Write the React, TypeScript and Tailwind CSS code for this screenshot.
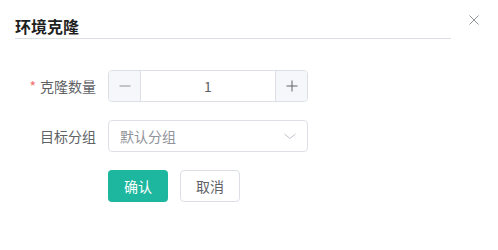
import React from 'react';

const font = { fontFamily: '"Noto Sans CJK SC", "Liberation Sans", sans-serif' };

export default function App() {
  return (
    <div className="w-[498px] h-[250px] bg-white relative text-[#606266]" style={font}>
      {/* Header */}
      <div className="pt-[15px] pl-[15px] pr-[47px]">
        <div className="h-[24px] border-b border-[#dcdfe6] text-[16px] leading-[22px] font-bold text-[#1f1f1f]">
          环境克隆
        </div>
      </div>
      <button className="absolute top-[15px] right-[19px] w-[10px] h-[10px] text-[#909399]">
        <svg viewBox="0 0 10 10" width="10" height="10" fill="none" stroke="currentColor" strokeWidth="1">
          <path d="M0.5 0.5 L9.5 9.5 M9.5 0.5 L0.5 9.5" />
        </svg>
      </button>

      {/* Form */}
      <div className="pt-[31px] flex flex-col gap-[18px]">
        <div className="flex items-center">
          <label className="w-[108px] pr-[12px] text-right text-[14px] text-[#606266]">
            <span className="text-[#f56c6c] mr-[4px]">*</span>克隆数量
          </label>
          <div className="w-[200px] h-[32px] flex border border-[#dcdfe6] rounded-[4px] overflow-hidden">
            <div className="w-[32px] bg-[#f5f7fa] border-r border-[#dcdfe6] flex items-center justify-center">
              <svg viewBox="0 0 12 12" width="12" height="12" stroke="#909399" strokeWidth="1">
                <path d="M0.5 6 H11.5" />
              </svg>
            </div>
            <div className="flex-1 flex items-center justify-center text-[14px] text-[#606266]">1</div>
            <div className="w-[32px] bg-[#f5f7fa] border-l border-[#dcdfe6] flex items-center justify-center">
              <svg viewBox="0 0 12 12" width="12" height="12" stroke="#606266" strokeWidth="1">
                <path d="M0.5 6 H11.5 M6 0.5 V11.5" />
              </svg>
            </div>
          </div>
        </div>

        <div className="flex items-center">
          <label className="w-[108px] pr-[12px] text-right text-[14px] text-[#606266]">目标分组</label>
          <div className="w-[200px] h-[32px] flex items-center justify-between border border-[#dcdfe6] rounded-[4px] pl-[11px] pr-[10px]">
            <span className="text-[14px] text-[#909399]">默认分组</span>
            <svg viewBox="0 0 14 14" width="14" height="14" fill="none" stroke="#c0c4cc" strokeWidth="1">
              <path d="M1.5 5 L7 9.5 L12.5 5" />
            </svg>
          </div>
        </div>

        <div className="flex pl-[108px] gap-[12px]">
          <button className="w-[60px] h-[32px] rounded-[4px] bg-[#1cb79e] text-white text-[14px]">确认</button>
          <button className="w-[60px] h-[32px] rounded-[4px] border border-[#dcdfe6] bg-white text-[#606266] text-[14px]">取消</button>
        </div>
      </div>
    </div>
  );
}
